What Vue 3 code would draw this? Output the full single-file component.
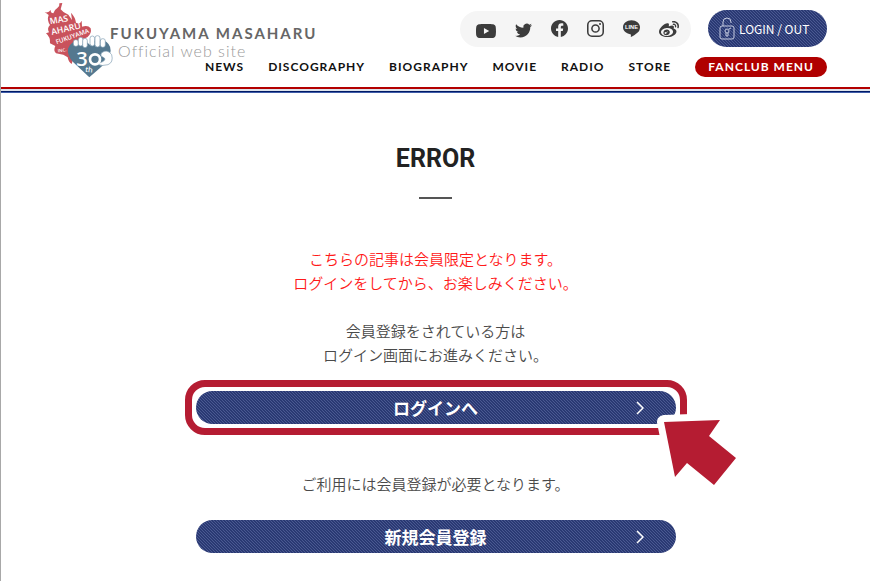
<template>
  <div class="page">
    <header class="header">
      <a href="#" class="brand">
        <svg class="brand-mark" viewBox="132 6 207 228" aria-hidden="true">
          <path
            class="flame"
            d="M187 9L182 28Q190 39 205 44L216 60L213 38Q226 52 228 68Q240 74 245 62L246 80Q264 74 272 85Q276 100 262 112L236 122L215 192Q205 186 203 172L190 164L168 160Q159 152 166 138L150 130Q152 112 138 100L147 97Q140 85 150 75Q140 60 146 45L134 36Q145 40 152 30Q152 40 160 40Q162 30 172 24Q180 18 178 10Z"
          />
          <g class="flame-text">
            <text x="151" y="73" font-size="26" transform="rotate(-10 151 73)">MAS</text>
            <text x="156" y="105" font-size="26" transform="rotate(-13 156 105)">AHARU</text>
            <text x="170" y="133" font-size="19" transform="rotate(-20 170 133)">FUKUYAMA</text>
            <text x="174" y="157" font-size="13" transform="rotate(-8 174 157)">INC.</text>
          </g>
          <path
            class="heart"
            d="M268 232L219 186Q201 166 204 146Q212 122 240 122Q260 122 269 134Q284 114 310 121Q332 130 332 152Q330 178 300 204Z"
          />
          <g class="hand">
            <rect x="220" y="119" width="15" height="20" rx="7" />
            <rect x="235" y="112" width="14" height="26" rx="7" />
            <rect x="248" y="115" width="14" height="28" rx="7" />
            <rect x="270" y="108" width="14" height="30" rx="7" />
            <rect x="285" y="107" width="15" height="34" rx="7" />
            <rect x="301" y="116" width="15" height="26" rx="7" />
            <path d="M305 158Q322 146 335 164Q341 187 324 194Q306 200 292 192L310 184Q320 176 309 172Q298 166 305 158Z" />
          </g>
          <text class="heart-text" x="229" y="197" font-size="60">3</text>
          <circle class="zero" cx="285" cy="178" r="15" />
          <text class="heart-text" x="255" y="215" font-size="22" transform="rotate(8 255 215)">th</text>
        </svg>
        <span class="brand-text">
          <strong>FUKUYAMA MASAHARU</strong>
          <span>Official web site</span>
        </span>
      </a>

      <div class="controls">
        <div class="top-row">
          <ul class="sns">
            <li v-for="item in sns" :key="item.name">
              <a href="#" :aria-label="item.name">
                <svg :class="item.size" viewBox="0 0 24 24">
                  <path :d="item.path" />
                  <text v-if="item.label" class="line-label" x="12" y="13">{{ item.label }}</text>
                </svg>
              </a>
            </li>
          </ul>
          <a href="#" class="login weave">
            <svg class="lock" viewBox="0 0 16 23" aria-hidden="true">
              <rect x="1" y="9" width="14" height="13" rx="2" />
              <path d="M4 9V5a4 4 0 0 1 8 0v1" />
              <circle cx="8" cy="14" r="2" />
              <path d="M7 16v3h2v-3M10 12l2-1" />
            </svg>
            LOGIN / OUT
          </a>
        </div>
        <nav class="nav">
          <a v-for="link in links" :key="link" href="#">{{ link }}</a>
          <a href="#" class="fanclub">FANCLUB MENU</a>
        </nav>
      </div>
    </header>

    <main class="main">
      <h1>ERROR</h1>
      <p class="notice">
        こちらの記事は会員限定となります。<br />
        ログインをしてから、お楽しみください。
      </p>
      <p class="guide">
        会員登録をされている方は<br />
        ログイン画面にお進みください。
      </p>
      <div class="highlight">
        <a href="#" class="cta weave">
          <span>ログインへ</span>
          <svg class="chevron" viewBox="0 0 8 14" aria-hidden="true"><path d="M1 1l6 6-6 6" /></svg>
        </a>
        <svg class="pointer" viewBox="0 0 90 82" aria-hidden="true">
          <path d="M12 12L68 10L57 26L84 48L62 75L35 53L23 67Z" />
        </svg>
      </div>
      <p class="register">ご利用には会員登録が必要となります。</p>
      <a href="#" class="cta weave">
        <span>新規会員登録</span>
        <svg class="chevron" viewBox="0 0 8 14" aria-hidden="true"><path d="M1 1l6 6-6 6" /></svg>
      </a>
    </main>
  </div>
</template>

<script setup>
const links = ['NEWS', 'DISCOGRAPHY', 'BIOGRAPHY', 'MOVIE', 'RADIO', 'STORE']

const sns = [
  {
    name: 'YouTube',
    size: 'wide low',
    path: 'M23.498 6.186a3.016 3.016 0 0 0-2.122-2.136C19.505 3.545 12 3.545 12 3.545s-7.505 0-9.377.505A3.017 3.017 0 0 0 .502 6.186C0 8.07 0 12 0 12s0 3.93.502 5.814a3.016 3.016 0 0 0 2.122 2.136c1.871.505 9.376.505 9.376.505s7.505 0 9.377-.505a3.015 3.015 0 0 0 2.122-2.136C24 15.93 24 12 24 12s0-3.93-.502-5.814zM9.545 15.568V8.432L15.818 12l-6.273 3.568z',
  },
  {
    name: 'Twitter',
    size: 'low',
    path: 'M23.953 4.57a10 10 0 01-2.825.775 4.958 4.958 0 002.163-2.723c-.951.555-2.005.959-3.127 1.184a4.92 4.92 0 00-8.384 4.482C7.69 8.095 4.067 6.13 1.64 3.162a4.822 4.822 0 00-.666 2.475c0 1.71.87 3.213 2.188 4.096a4.904 4.904 0 01-2.228-.616v.06a4.923 4.923 0 003.946 4.827 4.996 4.996 0 01-2.212.085 4.936 4.936 0 004.604 3.417 9.867 9.867 0 01-6.102 2.105c-.39 0-.779-.023-1.17-.067a13.995 13.995 0 007.557 2.209c9.053 0 13.998-7.496 13.998-13.985 0-.21 0-.42-.015-.63A9.935 9.935 0 0024 4.59z',
  },
  {
    name: 'Facebook',
    path: 'M24 12.073c0-6.627-5.373-12-12-12s-12 5.373-12 12c0 5.99 4.388 10.954 10.125 11.854v-8.385H7.078v-3.47h3.047V9.43c0-3.007 1.792-4.669 4.533-4.669 1.312 0 2.686.235 2.686.235v2.953H15.83c-1.491 0-1.956.925-1.956 1.874v2.25h3.328l-.532 3.47h-2.796v8.385C19.612 23.027 24 18.062 24 12.073z',
  },
  {
    name: 'Instagram',
    path: 'M7 0h10a7 7 0 0 1 7 7v10a7 7 0 0 1-7 7H7a7 7 0 0 1-7-7V7a7 7 0 0 1 7-7zM7 2.2a4.8 4.8 0 0 0-4.8 4.8v10a4.8 4.8 0 0 0 4.8 4.8h10a4.8 4.8 0 0 0 4.8-4.8V7a4.8 4.8 0 0 0-4.8-4.8zM12 5.84a6.16 6.16 0 1 1 0 12.32a6.16 6.16 0 0 1 0-12.32zM12 8a4 4 0 1 0 0 8a4 4 0 0 0 0-8zM18.4 4.15a1.44 1.44 0 1 1 0 2.88a1.44 1.44 0 0 1 0-2.88z',
  },
  {
    name: 'LINE',
    label: 'LINE',
    path: 'M12 .5C5.4.5 0 4.9 0 10.3c0 4.8 4.3 8.9 10.1 9.7.4.1.9.3 1.1.6.1.3.1.8 0 1.1l-.2 1.1c0 .3-.3 1.3 1.1.7s7.7-4.5 10.5-7.7C23.5 13.6 24 12 24 10.3 24 4.9 18.6.5 12 .5z',
  },
  {
    name: 'Weibo',
    size: 'wide',
    path: 'M10.098 20.323c-3.977.391-7.414-1.406-7.672-4.02-.259-2.609 2.759-5.047 6.74-5.441 3.979-.394 7.413 1.404 7.671 4.018.259 2.6-2.759 5.049-6.737 5.439l-.002.004zM9.05 17.219c-.384.616-1.208.884-1.829.602-.612-.279-.793-.991-.406-1.593.379-.595 1.176-.861 1.793-.601.622.263.82.972.442 1.592zm1.27-1.627c-.141.237-.449.353-.689.253-.236-.09-.313-.361-.177-.586.138-.227.436-.346.672-.24.239.09.315.36.18.601l.014-.028zm.176-2.719c-1.893-.493-4.033.45-4.857 2.118-.836 1.704-.026 3.591 1.886 4.21 1.983.64 4.318-.341 5.132-2.179.8-1.793-.201-3.642-2.161-4.149zm7.563-1.224c-.346-.105-.57-.18-.405-.615.375-.977.42-1.804 0-2.404-.781-1.112-2.915-1.053-5.364-.03 0 0-.766.331-.571-.271.376-1.217.315-2.224-.27-2.809-1.338-1.337-4.869.045-7.888 3.08C1.309 10.87 0 13.273 0 15.348c0 3.981 5.099 6.395 10.086 6.395 6.536 0 10.888-3.801 10.888-6.82 0-1.822-1.547-2.854-2.915-3.284v.01zm1.908-5.092c-.766-.856-1.908-1.187-2.96-.962-.436.09-.706.511-.616.932.09.42.511.691.932.602.511-.105 1.067.044 1.442.465.376.421.466.977.316 1.473-.136.406.089.856.51.992.405.119.857-.105.992-.512.33-1.021.12-2.178-.646-3.035l.03.045zm2.418-2.195c-1.576-1.757-3.905-2.419-6.054-1.968-.496.104-.812.587-.706 1.081.104.496.586.813 1.082.707 1.532-.331 3.185.15 4.296 1.383 1.112 1.246 1.429 2.943.947 4.416-.165.48.106 1.007.586 1.157.479.165.991-.104 1.157-.586.675-2.088.241-4.478-1.338-6.235l.03.045z',
  },
]
</script>

<style>
body {
  background: #fff;
}
</style>

<style scoped>
* {
  margin: 0;
  padding: 0;
  box-sizing: border-box;
}

a {
  color: inherit;
  text-decoration: none;
}

svg {
  display: block;
}

.page {
  min-height: 100vh;
  border-left: 1px solid #a8a8a8;
  background: #fff;
  color: #4a4a4a;
  font-family: "Noto Sans CJK JP", sans-serif;
}

/* the brand and the controls share one cell, the nav runs under the logo text */
.header {
  display: grid;
  padding: 0 43px;
}

.header::after {
  content: "";
  height: 6px;
  margin: 0 -43px;
  background: linear-gradient(#b30000 2px, #dde3ec 2px 4px, #001a66 4px 5px, #3f5ca8 5px);
}

.brand,
.controls {
  grid-area: 1 / 1;
}

.brand {
  display: flex;
  justify-self: start;
  align-items: flex-start;
  padding-top: 2px;
  font-family: Lato, sans-serif;
}

.brand-mark {
  width: 69px;
  height: 76px;
}

.flame {
  fill: #c9525c;
}

.flame-text,
.heart-text {
  fill: #fff;
  font-family: "Open Sans", sans-serif;
  font-weight: 600;
}

.heart {
  fill: #54788f;
}

.hand {
  fill: #fff;
  stroke: #7d9bb0;
  stroke-width: 2;
}

.zero {
  fill: #54788f;
  stroke: #fff;
  stroke-width: 8;
}

.brand-text {
  display: flex;
  flex-direction: column;
  gap: 2px;
  margin-left: -3px;
  padding-top: 23px;
  line-height: 16px;
}

.brand-text strong {
  color: #666;
  font-size: 15px;
  font-weight: 700;
  letter-spacing: 2px;
}

.brand-text span {
  padding-left: 8px;
  color: #999;
  font-size: 16px;
  font-weight: 300;
  letter-spacing: 1px;
}

.controls {
  display: flex;
  flex-direction: column;
  justify-self: end;
  align-items: flex-end;
  gap: 10px;
  padding: 10px 0;
}

.top-row {
  display: flex;
  align-items: center;
  gap: 17px;
}

.sns {
  display: flex;
  align-items: center;
  gap: 19px;
  height: 36px;
  padding: 0 12px 0 16px;
  border-radius: 18px;
  background: #f5f5f5;
  list-style: none;
}

.sns svg {
  width: 17px;
  height: 17px;
  fill: #3c3c3c;
}

.sns svg.wide {
  width: 20px;
  height: 20px;
}

.sns svg.low {
  margin-top: 4px;
}

.sns .line-label {
  fill: #fff;
  font-family: "Liberation Sans", sans-serif;
  font-size: 8px;
  font-weight: 700;
  text-anchor: middle;
}

.weave {
  background-color: #33427b;
  background-image: linear-gradient(45deg, #2a3973 25%, #4a5991 25% 50%, #2a3973 50% 75%, #4a5991 75%);
  background-size: 3px 3px;
  color: #fff;
}

.login {
  display: flex;
  align-items: center;
  gap: 4px;
  width: 119px;
  height: 37px;
  padding-left: 11px;
  border-radius: 19px;
  font-size: 12px;
  white-space: nowrap;
}

.lock {
  width: 16px;
  height: 23px;
  fill: none;
  stroke: #c5cbe0;
}

.nav {
  display: flex;
  align-items: center;
  gap: 24px;
  color: #111;
  font-family: Lato, sans-serif;
  font-size: 12px;
  font-weight: 700;
  line-height: 14px;
  letter-spacing: 1px;
}

.fanclub {
  padding: 3px 13px;
  border-radius: 10px;
  background: #b00000;
  color: #fff;
}

.main {
  max-width: 480px;
  margin: 0 auto;
  padding: 51px 0 28px;
  font-size: 15px;
  line-height: 24px;
  text-align: center;
}

h1 {
  color: #222;
  font-family: Roboto, sans-serif;
  font-size: 25px;
  font-weight: 700;
  line-height: 30px;
}

h1::after {
  content: "";
  display: block;
  width: 33px;
  height: 2px;
  margin: 23px auto 48px;
  background: #555;
}

.notice {
  margin-bottom: 24px;
  color: #ff1a1a;
}

p {
  font-weight: 350;
}

.highlight {
  position: relative;
  margin: 13px -11px 37px;
  padding: 4px;
  border: 7px solid #b51c32;
  border-radius: 20px;
}

.cta {
  display: grid;
  align-items: center;
  height: 33px;
  border-radius: 17px;
  font-size: 17px;
  font-weight: 700;
}

.cta > * {
  grid-area: 1 / 1;
}

.chevron {
  justify-self: end;
  width: 8px;
  height: 14px;
  margin-right: 32px;
  fill: none;
  stroke: #fff;
  stroke-width: 1.5;
}

.register {
  margin-bottom: 24px;
}

.pointer {
  position: absolute;
  right: -62px;
  bottom: -64px;
  width: 90px;
  height: 82px;
  fill: #b51c32;
  stroke: #fff;
  stroke-width: 14;
  stroke-linejoin: round;
  paint-order: stroke;
}
</style>
